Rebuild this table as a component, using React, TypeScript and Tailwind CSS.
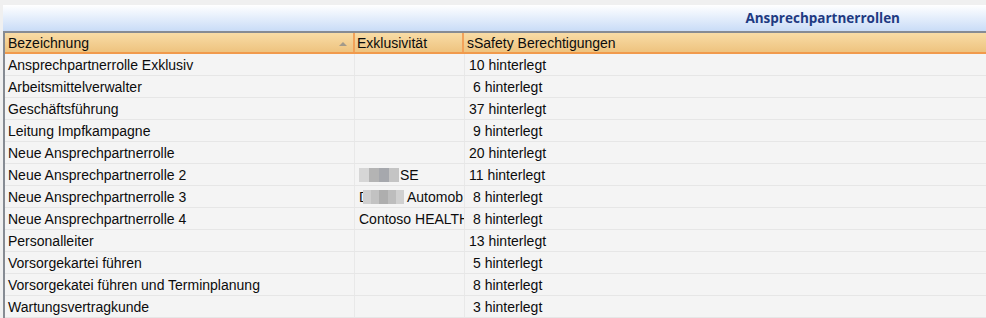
import React from "react";

type Row = { name: string; excl?: React.ReactNode; count: number };

function Blur({ w, tones }: { w: number; tones: string[] }) {
  return (
    <span className="inline-flex h-[14px] align-middle" style={{ width: w }}>
      {tones.map((t, i) => (
        <span key={i} className="flex-1 h-full" style={{ background: t }} />
      ))}
    </span>
  );
}

const rows: Row[] = [
  { name: "Ansprechpartnerrolle Exklusiv", count: 10 },
  { name: "Arbeitsmittelverwalter", count: 6 },
  { name: "Geschäftsführung", count: 37 },
  { name: "Leitung Impfkampagne", count: 9 },
  { name: "Neue Ansprechpartnerrolle", count: 20 },
  {
    name: "Neue Ansprechpartnerrolle 2",
    excl: (
      <span className="flex items-center">
        <Blur w={40} tones={["#d6d6d6", "#b4b4b4", "#a6a8ad", "#c4c4c4"]} />
        <span className="ml-[1px]">SE</span>
      </span>
    ),
    count: 11,
  },
  {
    name: "Neue Ansprechpartnerrolle 3",
    excl: (
      <span className="flex items-center whitespace-nowrap">
        <span className="w-[4px] overflow-hidden">D</span>
        <Blur w={41} tones={["#cfcfcf", "#c2c2c2", "#aeaeae", "#bdbdbd", "#d0d0d0"]} />
        <span className="ml-[3px]">Automob</span>
      </span>
    ),
    count: 8,
  },
  { name: "Neue Ansprechpartnerrolle 4", excl: "Contoso HEALTH", count: 8 },
  { name: "Personalleiter", count: 13 },
  { name: "Vorsorgekartei führen", count: 5 },
  { name: "Vorsorgekatei führen und Terminplanung", count: 8 },
  { name: "Wartungsvertragkunde", count: 3 },
];

export default function App() {
  return (
    <div
      className="w-[986px] h-[318px] overflow-hidden bg-[#f0f0f0] pt-[5px] text-[14px] text-[#0c0c0c]"
      style={{ fontFamily: '"Liberation Sans", Arial, sans-serif' }}
    >
      <div className="ml-[3px] h-[26px] bg-gradient-to-b from-[#ffffff] to-[#c9dcf7] flex items-center justify-end pr-[86px]">
        <span
          className="text-[13.5px] font-bold text-[#1e3a82]"
          style={{ fontFamily: '"Open Sans", "DejaVu Sans", sans-serif' }}
        >
          Ansprechpartnerrollen
        </span>
      </div>
      <div className="ml-[3px] border-t-2 border-l-2 border-[#868b93] bg-[#f4f4f4]">
        {/* column headers */}
        <div className="flex h-[21px] bg-gradient-to-b from-[#f8dca6] to-[#eec37f] border-b-2 border-[#f19a4c]">
          <div className="w-[350px] flex items-center justify-between pl-[3px] pr-[6px] pt-[1px] border-r-2 border-[#f2a25a]">
            <span>Bezeichnung</span>
            <svg width="8" height="5" viewBox="0 0 8 5" className="mt-[1px]">
              <path d="M0 5 L4 1 L8 5 Z" fill="#a39a8a" />
            </svg>
          </div>
          <div className="w-[109px] flex items-center pl-[2px] pt-[1px] border-r-2 border-[#f2a25a]">
            Exklusivität
          </div>
          <div className="flex-1 flex items-center pl-[3px] pt-[1px]">sSafety Berechtigungen</div>
        </div>
        {/* rows */}
        {rows.map((r) => (
          <div key={r.name} className="flex h-[22px] border-b border-[#e6e6e6]">
            <div className="w-[350px] flex items-center pl-[3px] pt-[1px] border-r border-[#e8e8e8] whitespace-nowrap">
              {r.name}
            </div>
            <div className="w-[110px] flex items-center pl-[4px] pr-[2px] pt-[1px] border-r border-[#e8e8e8] overflow-hidden whitespace-nowrap">
              {r.excl}
            </div>
            <div className={`flex-1 flex items-center pt-[1px] ${r.count < 10 ? "pl-[8px]" : "pl-[4px]"}`}>
              {r.count} hinterlegt
            </div>
          </div>
        ))}
      </div>
    </div>
  );
}
